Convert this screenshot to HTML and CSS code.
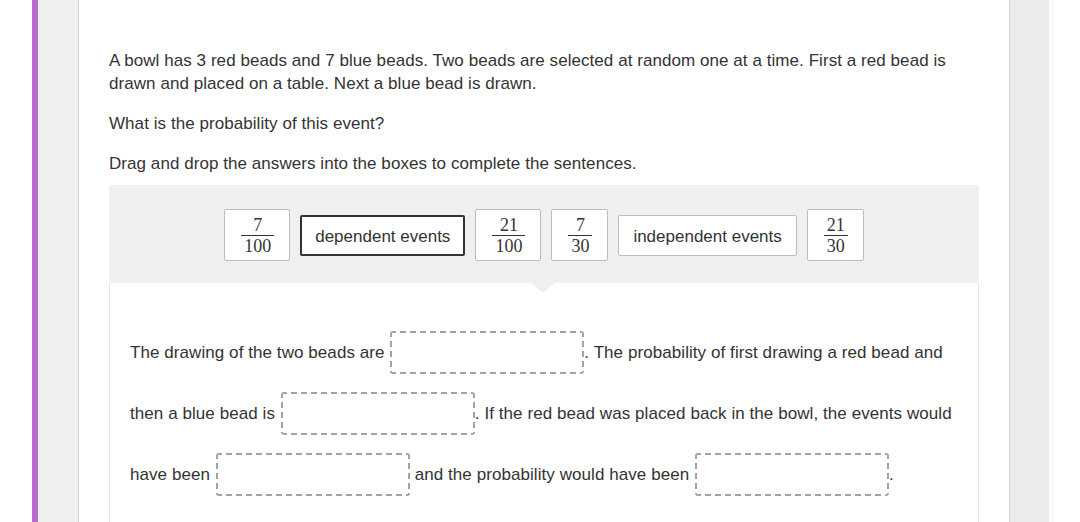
FILE: index.html
```html
<!DOCTYPE html>
<html lang="en">
<head>
<meta charset="utf-8">
<title>Probability question</title>
<link rel="stylesheet" href="styles.css">
</head>
<body>
<div class="page">
  <div class="gutter"></div>
  <div class="accent"></div>
  <div class="rail"></div>
  <main class="panel">
    <p class="stem">A bowl has 3 red beads and 7 blue beads. Two beads are selected at random one at a time. First a red bead is drawn and placed on a table. Next a blue bead is drawn.</p>
    <p class="stem">What is the probability of this event?</p>
    <p class="stem">Drag and drop the answers into the boxes to complete the sentences.</p>
    <div class="widget">
      <div class="tray">
        <div class="tile tile-frac"><span class="frac"><span class="num">7</span><span class="den">100</span></span></div>
        <div class="tile tile-text tile-active">dependent events</div>
        <div class="tile tile-frac"><span class="frac"><span class="num">21</span><span class="den">100</span></span></div>
        <div class="tile tile-frac"><span class="frac"><span class="num">7</span><span class="den">30</span></span></div>
        <div class="tile tile-text">independent events</div>
        <div class="tile tile-frac"><span class="frac"><span class="num">21</span><span class="den">30</span></span></div>
      </div>
      <div class="dropzone">
        <p class="sentence">The drawing of the two beads are <span class="slot"></span>. The probability of first drawing a red bead and then a blue bead is <span class="slot"></span>. If the red bead was placed back in the bowl, the events would have been <span class="slot"></span> and the probability would have been <span class="slot"></span>.</p>
      </div>
    </div>
  </main>
  <div class="rail rail-right"></div>
  <div class="gutter gutter-right"></div>
</div>
</body>
</html>
```

FILE: styles.css
```css
* { box-sizing: border-box; }
html, body { margin: 0; padding: 0; background: #fff; }
body {
  font-family: "Liberation Sans", Arial, sans-serif;
  font-size: 17px;
  letter-spacing: 0.06px;
  color: #333;
}
.page {
  display: flex;
  width: 1080px;
  height: 522px;
  overflow: hidden;
}
.gutter { width: 32px; flex: none; background: #fff; }
.accent { width: 6px; flex: none; background: #b96bd0; }
.rail {
  width: 41px;
  flex: none;
  background: #efefef;
  border-right: 1px solid #d2d2d2;
}
.panel {
  width: 931px;
  flex: none;
  background: #fff;
  border-right: 1px solid #d4d4d4;
  padding: 49px 30px 0 30px;
}
.rail-right {
  width: 39px;
  background: #ebebeb;
  border-right: none;
}
.gutter-right {
  flex: 1;
  border-left: 3px solid #fff;
  box-shadow: inset 1px 0 0 #f3f3f3;
}
.stem {
  margin: 0 0 17px 0;
  line-height: 23px;
}
.stem:last-of-type { margin-bottom: 10px; }
.widget {
  border: 1px solid #e6e6e6;
  border-top: none;
  height: 400px;
}
.tray {
  position: relative;
  background: #f0f0f0;
  height: 98px;
  margin: 0 -1px;
  display: flex;
  justify-content: center;
  align-items: center;
  gap: 10px;
  padding-top: 2px;
}
.tray::after {
  content: "";
  position: absolute;
  left: 50%;
  bottom: -10px;
  margin-left: -13px;
  border-left: 12px solid transparent;
  border-right: 12px solid transparent;
  border-top: 10px solid #f0f0f0;
}
.tile {
  background: #fff;
  border: 1px solid #bdbdbd;
  border-radius: 2px;
  display: flex;
  align-items: center;
  justify-content: center;
}
.tile-frac {
  height: 52px;
  padding: 0 15px 0 16px;
}
.tile-text {
  height: 41px;
  padding: 3px 14px 0;
  font-size: 17px;
  letter-spacing: 0;
  color: #333;
}
.tile-active {
  border: 2px solid #333;
  padding: 3px 13px 0;
}
.frac {
  display: inline-flex;
  flex-direction: column;
  align-items: stretch;
  font-family: "Liberation Serif", "Times New Roman", serif;
  font-size: 18px;
  letter-spacing: 0;
  color: #333;
  text-align: center;
  padding-top: 2px;
}
.num {
  line-height: 17px;
  padding: 0 3px 1px;
  border-bottom: 1px solid #333;
}
.den {
  line-height: 18px;
  padding: 1px 3px 0;
}
.dropzone {
  padding: 39px 20px 0 20px;
  letter-spacing: 0.07px;
}
.sentence {
  margin: 0;
  line-height: 61px;
}
.slot {
  display: inline-block;
  width: 194px;
  height: 43px;
  vertical-align: middle;
  border-radius: 3px;
  margin-left: 1px;
  margin-top: -3px;
  background:
    repeating-linear-gradient(90deg, #a3a3a3 0 6px, transparent 6px 10px) left top / 100% 2px no-repeat,
    repeating-linear-gradient(90deg, #a3a3a3 0 6px, transparent 6px 10px) left bottom / 100% 2px no-repeat,
    repeating-linear-gradient(180deg, #a3a3a3 0 6px, transparent 6px 10px) left top / 2px 100% no-repeat,
    repeating-linear-gradient(180deg, #a3a3a3 0 6px, transparent 6px 10px) right top / 2px 100% no-repeat;
}
```
